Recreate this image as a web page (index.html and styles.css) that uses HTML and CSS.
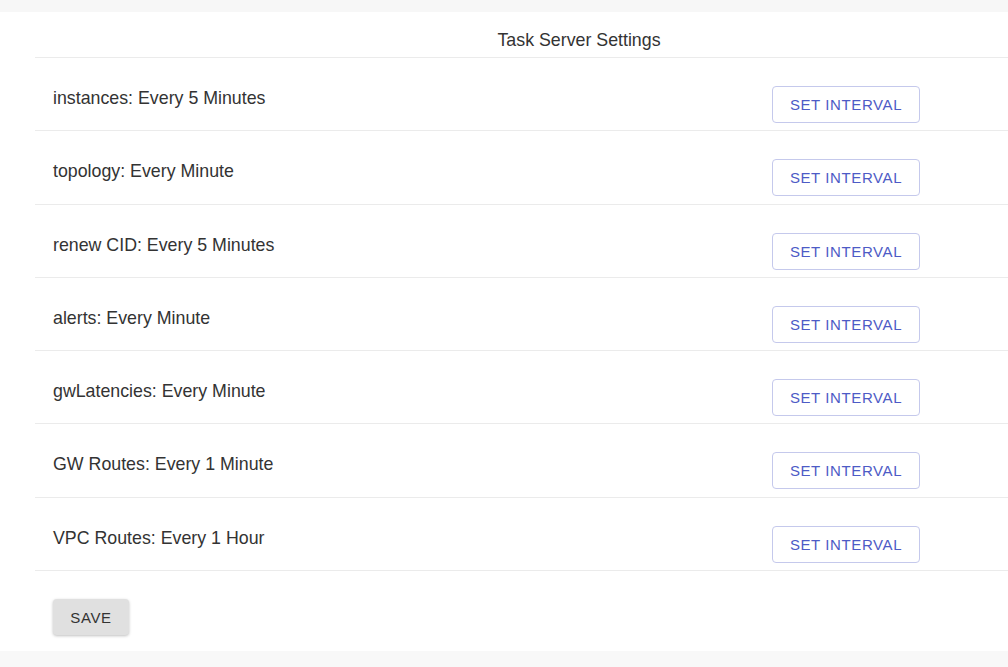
FILE: index.html
```html
<!DOCTYPE html>
<html>
<head>
<meta charset="utf-8">
<link rel="stylesheet" href="styles.css">
</head>
<body>
<div class="topbar"></div>
<div class="card">
  <div class="table">
    <div class="title">Task Server Settings</div>
    <div class="row"><div class="label">instances: Every 5 Minutes</div><button class="btn-outline">SET INTERVAL</button></div>
    <div class="row"><div class="label">topology: Every Minute</div><button class="btn-outline">SET INTERVAL</button></div>
    <div class="row"><div class="label">renew CID: Every 5 Minutes</div><button class="btn-outline">SET INTERVAL</button></div>
    <div class="row"><div class="label">alerts: Every Minute</div><button class="btn-outline">SET INTERVAL</button></div>
    <div class="row"><div class="label">gwLatencies: Every Minute</div><button class="btn-outline">SET INTERVAL</button></div>
    <div class="row"><div class="label">GW Routes: Every 1 Minute</div><button class="btn-outline">SET INTERVAL</button></div>
    <div class="row"><div class="label">VPC Routes: Every 1 Hour</div><button class="btn-outline">SET INTERVAL</button></div>
  </div>
  <div class="actions"><button class="btn-save">SAVE</button></div>
</div>
</body>
</html>
```

FILE: styles.css
```css
html, body {
  margin: 0;
  padding: 0;
  background: #f8f8f8;
  font-family: "Liberation Sans", Arial, sans-serif;
  color: #333;
  overflow: hidden;
}
.topbar {
  height: 12px;
  background: #f7f7f7;
}
.card {
  background: #fff;
  height: 639px;
  overflow: hidden;
  padding-left: 35px;
}
.table {
  width: 1088px;
}
.title {
  height: 46px;
  border-bottom: 1px solid #ebebeb;
  text-align: center;
  font-size: 17.8px;
  line-height: 22px;
  padding-top: 17px;
  box-sizing: border-box;
  color: #333;
}
.row {
  display: grid;
  grid-template-columns: 737px auto;
  align-items: start;
  height: 73.3px;
  box-sizing: border-box;
  border-bottom: 1px solid #ebebeb;
  padding-top: 28px;
}
.label {
  padding-left: 18px;
  font-size: 17.8px;
  line-height: 24px;
  margin-top: 0;
}
.btn-outline {
  width: 148px;
  height: 37px;
  border: 1px solid #c5c9ec;
  border-radius: 4px;
  background: #fff;
  color: #4d5bc6;
  font-family: "Liberation Sans", Arial, sans-serif;
  font-size: 15px;
  letter-spacing: 0.6px;
  padding: 0;
  justify-self: start;
}
.actions {
  padding: 28px 0 0 18px;
}
.btn-save {
  width: 76px;
  height: 36px;
  border: none;
  border-radius: 4px;
  background: #e0e0e0;
  color: #333;
  font-family: "Liberation Sans", Arial, sans-serif;
  font-size: 15px;
  letter-spacing: 0.6px;
  box-shadow: 0 1px 3px rgba(0,0,0,0.25);
}
```
